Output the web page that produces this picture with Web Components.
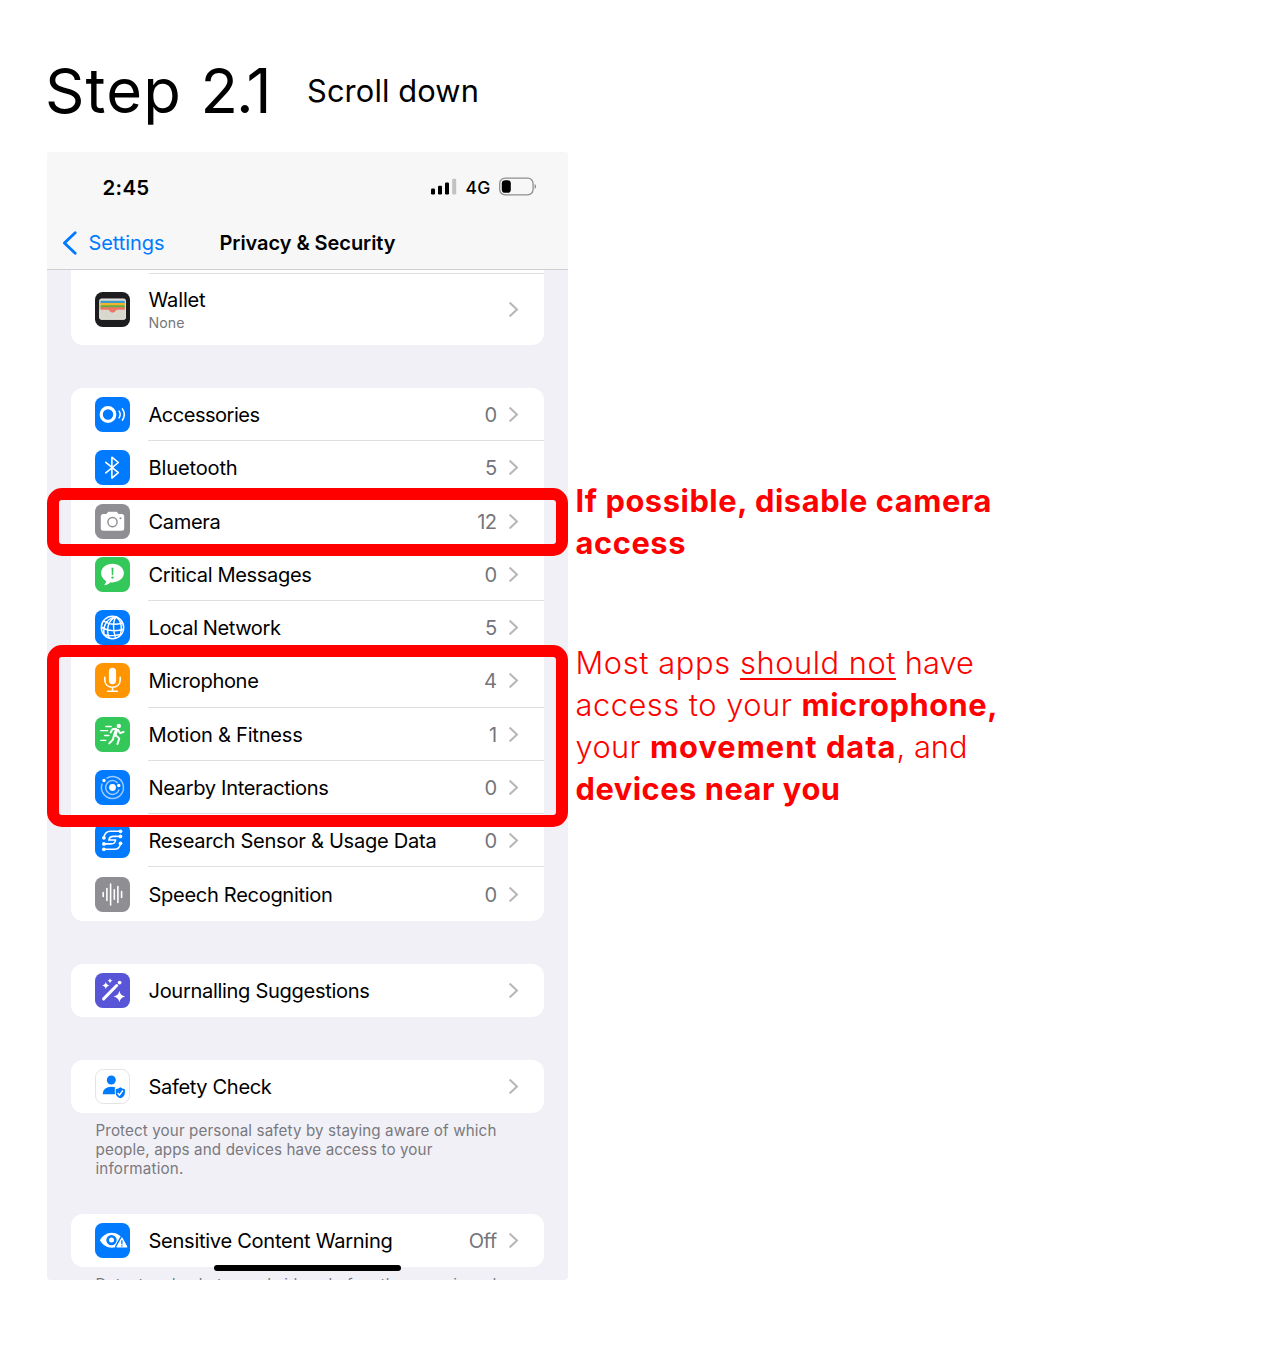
<!DOCTYPE html>
<html lang="en">
<head>
<meta charset="utf-8">
<title>Step 2.1</title>
<style>
html,body{margin:0;background:#fff}
body{font-family:Inter,"Liberation Sans",sans-serif;color:#000;width:1266px;height:1371px;overflow:hidden}
</style>
</head>
<body>
<guide-page>
  <step-heading slot="heading">
    <fit-text w="155.5">Step </fit-text><fit-text w="69">2.1</fit-text>
    <fit-text slot="action" w="172">Scroll down</fit-text>
  </step-heading>

  <phone-screen slot="phone">
    <status-bar slot="top"></status-bar>
    <nav-bar slot="top"><fit-text slot="back" w="76">Settings</fit-text><fit-text w="176">Privacy &amp; Security</fit-text></nav-bar>

    <settings-card first>
      <settings-row icon="wallet" tall><fit-text w="57">Wallet</fit-text><fit-text slot="sub" w="36">None</fit-text></settings-row>
    </settings-card>

    <settings-card style="margin-top:43px">
      <settings-row icon="accessories"><fit-text w="111">Accessories</fit-text><span slot="value">0</span></settings-row>
      <settings-row icon="bluetooth"><fit-text w="89">Bluetooth</fit-text><span slot="value">5</span></settings-row>
      <settings-row icon="camera"><fit-text w="72">Camera</fit-text><span slot="value">12</span></settings-row>
      <settings-row icon="critical"><fit-text w="163">Critical Messages</fit-text><span slot="value">0</span></settings-row>
      <settings-row icon="network"><fit-text w="132">Local Network</fit-text><span slot="value">5</span></settings-row>
      <settings-row icon="microphone"><fit-text w="110">Microphone</fit-text><span slot="value">4</span></settings-row>
      <settings-row icon="motion"><fit-text w="154">Motion &amp; Fitness</fit-text><span slot="value">1</span></settings-row>
      <settings-row icon="nearby"><fit-text w="180">Nearby Interactions</fit-text><span slot="value">0</span></settings-row>
      <settings-row icon="research"><fit-text w="288">Research Sensor &amp; Usage Data</fit-text><span slot="value">0</span></settings-row>
      <settings-row icon="speech"><fit-text w="184">Speech Recognition</fit-text><span slot="value">0</span></settings-row>
    </settings-card>

    <settings-card style="margin-top:43px">
      <settings-row icon="journal"><fit-text w="221">Journalling Suggestions</fit-text></settings-row>
    </settings-card>

    <settings-card style="margin-top:43px">
      <settings-row icon="safety"><fit-text w="123">Safety Check</fit-text></settings-row>
    </settings-card>
    <card-footnote>
      <fit-text w="401">Protect your personal safety by staying aware of which</fit-text>
      <fit-text w="337">people, apps and devices have access to your</fit-text>
      <fit-text w="88">information.</fit-text>
    </card-footnote>

    <settings-card style="margin-top:35.500px">
      <settings-row icon="sensitive"><fit-text w="244">Sensitive Content Warning</fit-text><span slot="value">Off</span></settings-row>
    </settings-card>
    <card-footnote>
      <fit-text w="401">Detect nude photos and videos before they are viewed</fit-text>
    </card-footnote>

    <highlight-box slot="marks" style="top:335.5px;height:68.5px"></highlight-box>
    <highlight-box slot="marks" style="top:493px;height:181.5px"></highlight-box>
  </phone-screen>

  <side-note slot="notes">
    <div><fit-text w="416.5" bold>If possible, disable camera</fit-text></div>
    <div><fit-text w="110.5" bold>access</fit-text></div>
  </side-note>
  <side-note slot="notes">
    <div><fit-text w="164.5">Most apps </fit-text><fit-text w="156" line>should not</fit-text><fit-text w="78"> have</fit-text></div>
    <div><fit-text w="226">access to your </fit-text><fit-text w="196.5" bold>microphone,</fit-text></div>
    <div><fit-text w="74.5">your </fit-text><fit-text w="246.5" bold>movement data</fit-text><fit-text w="71">, and</fit-text></div>
    <div><fit-text w="265" bold>devices near you</fit-text></div>
  </side-note>
</guide-page>

<script>
const define = (name, html, setup) => customElements.define(name, class extends HTMLElement {
  constructor() {
    super();
    this.attachShadow({ mode: 'open' }).innerHTML = html;
  }
  connectedCallback() { if (setup) setup.call(this, this.shadowRoot); }
});

const star = (x, y, r) => {
  const k = r * 0.16;
  return `<path fill="#fff" d="M${x} ${y - r}Q${x + k} ${y - k} ${x + r} ${y}Q${x + k} ${y + k} ${x} ${y + r}Q${x - k} ${y + k} ${x - r} ${y}Q${x - k} ${y - k} ${x} ${y - r}Z"/>`;
};
const dots = (list, r) => list.map(([x, y]) => `<circle cx="${x}" cy="${y}" r="${r}" fill="#fff"/>`).join('');

const ICONS = {
  wallet: ['#1d1d1f', `<rect x="4.4" y="6.7" width="26.4" height="20.9" rx="2" fill="#d9d8cf"/>
    <path fill="#3c9bcb" d="M5.4 8.7h24.4v3H5.4z"/><path fill="#f3b42c" d="M5.4 11h24.4v3H5.4z"/><path fill="#62ad45" d="M5.4 13.3h24.4v3H5.4z"/>
    <path fill="#ef7564" d="M5.4 15.3h24.4v3h-7c-1 0-1.500.400-2.200 1.300-1.700 2.200-4.300 2.200-6 0-.7-.9-1.200-1.300-2.200-1.300h-7z"/>
    <path fill="#d9d8cf" d="M4.400 17.700h8c1.100 0 1.600.500 2.300 1.400 1.600 2 4.200 2 5.800 0 .7-.9 1.200-1.400 2.300-1.400h8v7.900a2 2 0 0 1-2 2H6.400a2 2 0 0 1-2-2z"/>
    <rect x="4.700" y="7" width="25.800" height="20.300" rx="1.800" fill="none" stroke="#ecebe5" stroke-width=".7"/>`],
  accessories: ['#007aff', `<g fill="none" stroke="#fff"><circle cx="13" cy="17.500" r="6.800" stroke-width="3.200"/>
    <path stroke-width="1.500" stroke-linecap="round" d="M24.100 14.200Q26.300 17.500 24.100 20.800M27.400 11.900Q31.200 17.500 27.400 23.100"/></g>`],
  bluetooth: ['#007aff', `<path fill="none" stroke="#fff" stroke-width="1.600" stroke-linejoin="round" stroke-linecap="round" d="M10.800 12.300 23.400 22.700 16.900 28.100V7.200L23.400 12.500 10.800 22.900"/>`],
  camera: ['#8e8e93', `<path fill="#fff" d="M8.300 9.900h2.100c1 0 1.300-.3 1.800-1 .5-.8 1-1.200 2-1.200h6.600c1 0 1.500.4 2 1.200.5.7.8 1 1.800 1h2.100A2.500 2.500 0 0 1 29.200 12.400v11.800a2.500 2.500 0 0 1-2.500 2.500H8.300a2.500 2.500 0 0 1-2.500-2.500V12.400A2.500 2.500 0 0 1 8.300 9.900z"/>
    <circle cx="17.500" cy="18.100" r="4.600" fill="none" stroke="#8e8e93" stroke-width="1.400"/><circle cx="25.500" cy="14.200" r="1" fill="#8e8e93"/>`],
  critical: ['#34c759', `<path fill="#fff" d="M17.500 6.800c6.300 0 11.400 4.100 11.400 9.300s-5.100 9.300-11.400 9.300c-.8 0-1.500 0-2.200-.2-1.200 1.400-3.200 2.700-5.300 3-.5 0-.7-.4-.4-.8.8-.8 1.400-1.900 1.400-3.400C8 22.300 6.100 19.400 6.100 16.100c0-5.200 5.100-9.300 11.400-9.300z"/>
    <path fill="#34c759" d="M16.500 10.700h2l-.4 7.600h-1.200z"/><circle cx="17.500" cy="20.600" r="1.200" fill="#34c759"/>`],
  network: ['#007aff', `<g fill="none" stroke="#fff" stroke-width="1.450"><circle cx="17.500" cy="17.500" r="11.200"/>
    <path d="M21 6.900C13.600 10 10.700 18.200 14 28M21 6.900C18 11 17.500 20 20.700 28.200M21 6.900C26.300 10.500 27.800 18 25.200 25.500M8.500 11C14 14.600 21.500 14.900 27.500 12.700M6.400 17.200C13 21.500 22.500 21.300 28.500 19.200M9 24.700C14.500 26 21 25.800 26.500 24.200M21 6.900C12.500 8 7.500 15 9 24.700"/></g>`],
  microphone: ['#ff9500', `<rect x="13.900" y="4.800" width="7.200" height="16.400" rx="3.600" fill="#fff"/>
    <path fill="none" stroke="#fff" stroke-width="1.600" stroke-linecap="round" d="M9.800 14.300v2.500c0 4.600 3.200 7.500 7.700 7.500s7.700-2.900 7.700-7.500v-2.500M17.500 24.500v3.700M12.600 28.300h9.800"/>`],
  motion: ['#34c759', `<circle cx="23.800" cy="8.900" r="2.200" fill="#fff"/>
    <g fill="none" stroke="#fff" stroke-linecap="round" stroke-linejoin="round"><path stroke-width="1.300" d="M10.800 9.500h5.400M5.700 13.700h7M9.500 18.500h4.500M5.700 23.300h5.200"/>
    <path stroke-width="3.300" d="M21.500 13.200 19.600 18.300"/><path stroke-width="1.900" d="M21 11.700 17.400 12.200 15.600 15.500M23 12.800l2.200 3.400 3.500-1.300M20.700 18.200l3.600 3.200-1.900 5.700M18.800 18.800l-.8 3.700-3.700 3.900"/></g>`],
  nearby: ['#007aff', `<g fill="none" stroke="#fff" stroke-width="1.500" opacity=".6"><path d="M11.500 8.300A11 11 0 1 1 7.200 13.600M24.100 19.500A6.900 6.900 0 1 1 22.700 12.900"/></g>
    <circle cx="17.500" cy="17.500" r="3.400" fill="#fff"/>${dots([[9, 10.500], [23.700, 15.500]], 1.700)}`],
  research: ['#007aff', `<path fill="none" stroke="#fff" stroke-width="1.600" stroke-linecap="round" d="M8.900 14.800C9.500 10.500 11.500 8.300 15.500 8.300h10M25.500 13.400H18.500C15.500 13.400 14.200 14.800 13.900 17H20M8.900 20.900H16C19 20.900 20.300 19.500 20.600 17M25.500 20.300c-.5 4-2.600 6-6.500 6H8.900"/>
    ${dots([[25.500, 8.300], [25.500, 13.400], [8.900, 14.800], [8.900, 20.900], [25.500, 20.300], [8.900, 26.300]], 1.850)}`],
  speech: ['#8e8e93', `<path fill="none" stroke="#fff" stroke-width="1.600" stroke-linecap="round" d="M8.200 15.500v4M11.900 11.500v12M15.600 7v21M19.300 12.800v9.400M22.900 9.500v16M26.600 14.600v5.800"/>`],
  journal: ['#5856d6', `<path fill="none" stroke="#fff" stroke-width="3" stroke-linecap="round" d="M8.600 25.900 21.700 12.500"/><circle cx="24.600" cy="9.600" r="1.900" fill="#fff"/>${star(10.8, 12.5, 3.7)}${star(15, 7.7, 2.5)}${star(24.4, 23.5, 5.8)}`],
  safety: ['#fff', `<circle cx="16.300" cy="11" r="4.500" fill="#007aff"/><path fill="#007aff" d="M7.800 25.300c0-4.700 3.500-7.500 8.500-7.500 1.700 0 3.200.3 4.400.9-.5.300-.9.500-.9 1.200v3.300c0 .8.100 1.500.4 2.100z"/>
    <path fill="#007aff" d="M25.300 18.200c1.300 1 2.600 1.500 4 1.700.4 0 .6.300.6.700v3.200c0 3-1.900 4.500-4.600 5.500-2.700-1-4.600-2.500-4.600-5.500v-3.200c0-.4.200-.7.600-.7 1.400-.2 2.700-.7 4-1.700z"/>
    <path fill="none" stroke="#fff" stroke-width="1.400" d="m22.700 24 1.800 2.200 3.300-4.700"/>`],
  sensitive: ['#007aff', `<path fill="#fff" d="M4.900 17.200c2.300-4.300 6.700-7.500 11.900-7.500s9.600 3.200 11.900 7.500c-2.300 4.300-6.700 7.500-11.900 7.500S7.200 21.500 4.900 17.200z"/>
    <circle cx="16.500" cy="17.100" r="3.850" fill="none" stroke="#007aff" stroke-width="2.700"/>
    <path fill="#fff" stroke="#007aff" stroke-width="1.400" stroke-linejoin="round" d="M25.900 14.100c.5-.8 1.500-.8 2 0l5 9.100c.5 1-.1 2.100-1.200 2.100h-9.600c-1.100 0-1.700-1.100-1.200-2.100z"/>
    <path stroke="#007aff" stroke-width="1.300" d="M26.900 17.300v4M26.900 22.200v1.400"/>`]
};

define('guide-page', `<style>
  :host{display:flex;flex-direction:column;padding:52px 0 0 47px;width:1219px}
  .body{display:flex;align-items:flex-start;gap:7.500px;margin-top:24px}
  .notes{display:flex;flex-direction:column;gap:77.500px;padding-top:328px}
</style><slot name="heading"></slot><div class="body"><slot name="phone"></slot><div class="notes"><slot name="notes"></slot></div></div>`);

define('step-heading', `<style>
  :host{display:flex;align-items:center;height:76px;font-size:61.500px}
  .action{font-size:30.800px;margin-left:37.500px}
  .title{line-height:76px;margin-left:-2px;padding-top:1px;display:flex}
</style><div class="title"><slot></slot></div><div class="action"><slot name="action"></slot></div>`);

define('phone-screen', `<style>
  :host{display:block;position:relative;width:521px;height:1128px;background:#f1f0f6;border-radius:4px}
  .screen{height:1128px;overflow:hidden;border-radius:4px;display:flex;flex-direction:column}
  .top{background:#f7f7f7;height:117px;flex:none;border-bottom:1px solid #cfcfd2;display:flex;flex-direction:column}
  .list{display:flex;flex-direction:column;padding:0 24.500px 0 24px}
  .home{position:absolute;left:167px;top:1113px;width:187px;height:6px;border-radius:3px;background:#000}
</style><div class="screen"><div class="top"><slot name="top"></slot></div><div class="list"><slot></slot></div></div><div class="home"></div><slot name="marks"></slot>`);

define('status-bar', `<style>
  :host{display:flex;align-items:center;height:69px;padding:0 31px 0 55.500px;font-size:20.500px;font-weight:600}
  .net{font-size:17.500px;font-weight:500;margin:2px 8.500px 0 9px}
  .fill{flex:1}
  .time{padding-top:1px}
  svg{display:block}
</style><div class="time"><fit-text w="47">2:45</fit-text></div><div class="fill"></div>
<svg width="26" height="18" viewBox="0 0 26 18"><rect y="10.500" width="4" height="6" rx="1.200"/><rect x="7" y="7.800" width="4" height="8.700" rx="1.200"/><rect x="14" y="4.500" width="4" height="12" rx="1.200"/><rect x="21.200" y=".8" width="4" height="15.700" rx="1.200" fill="#c2c2c4"/></svg>
<div class="net"><fit-text w="25">4G</fit-text></div>
<svg width="38" height="19" viewBox="0 0 38 19"><rect x=".7" y="1.200" width="33.400" height="16.600" rx="5.300" fill="none" stroke="#8f8f91" stroke-width="1.300"/><rect x="2.800" y="3.200" width="9" height="12.600" rx="3.400"/><path fill="#8f8f91" d="M35.600 7c2 .9 2 4.100 0 5z"/></svg>`);

define('nav-bar', `<style>
  :host{display:flex;align-items:center;height:44px;font-size:20px;font-weight:600}
  svg{display:block;margin-left:14px}
  .back{color:#007aff;font-weight:400;width:120px;margin-left:10.500px}
  .title{margin-left:11px}
</style><svg width="17" height="26" viewBox="0 0 17 26"><path d="M14.200 2.800 3.400 13l10.800 10.200" fill="none" stroke="#007aff" stroke-width="2.900" stroke-linecap="round" stroke-linejoin="round"/></svg><div class="back"><slot name="back"></slot></div><div class="title"><slot></slot></div>`);

define('settings-card', `<style>
  :host{display:flex;flex-direction:column;background:#fff;border-radius:12px;overflow:hidden;flex:none}
  :host([first]){border-radius:0 0 12px 12px;height:75px}
  .gap{display:none;height:3px;flex:none;margin-left:78px;border-bottom:1px solid #dfdfe1}
  :host([first]) .gap{display:block}
  ::slotted(settings-row:last-child){--sep:transparent}
</style><div class="gap"></div><slot></slot>`);

define('settings-row', `<style>
  :host{display:flex;align-items:stretch;height:53.280px;padding-left:24px;font-size:20.100px}
  :host([tall]){height:71px}
  .icon{width:35px;height:35px;align-self:center;flex:none}
  svg{display:block}
  .main{flex:1;margin-left:18px;display:flex;align-items:center;border-bottom:1px solid var(--sep,#dfdfe1);padding:1px 24.500px 0 0}
  .label{flex:1;display:flex;flex-direction:column;align-items:flex-start;justify-content:center;padding:1px 0 0 .5px}
  .sub{font-size:14.200px;color:#77777b;line-height:17px}
  :host([tall]) .main{padding-top:0}
  :host([tall]) .label{line-height:24px;gap:2px}
  .value{color:#75757a;margin-right:12.500px;letter-spacing:-.6px;padding-top:1px}
</style><div class="icon"></div><div class="main"><div class="label"><slot></slot><div class="sub"><slot name="sub"></slot></div></div><div class="value"><slot name="value"></slot></div>
<svg width="10" height="17" viewBox="0 0 10 17"><path d="M1.300 2.200 8 8.500 1.300 14.800" fill="none" stroke="#b8b8ba" stroke-width="2.200" stroke-linecap="round" stroke-linejoin="round"/></svg></div>`,
function (root) {
  const [bg, art] = ICONS[this.getAttribute('icon')];
  const edge = bg === '#fff' ? ' stroke="#e3e3e6" stroke-width="1"' : '';
  root.querySelector('.icon').innerHTML = `<svg width="35" height="35" viewBox="0 0 35 35"><rect ${edge ? 'x=".5" y=".5" width="34" height="34"' : 'width="35" height="35"'} rx="7.800" fill="${bg}"${edge}/>${art}</svg>`;
});

define('card-footnote', `<style>
  :host{display:flex;flex-direction:column;align-items:flex-start;padding:7.500px 0 0 24.500px;font-size:15.200px;line-height:19.300px;color:#79797f;flex:none}
</style><slot></slot>`);

define('highlight-box', `<style>
  :host{display:block;position:absolute;left:0;width:521px;box-sizing:border-box;border:12.500px solid #f00;border-radius:15px}
</style>`);

define('side-note', `<style>
  :host{display:block;color:#f00;font-size:30.800px;line-height:42px;font-weight:350;white-space:nowrap}
</style><slot></slot>`);

/* Text run that spreads its letters over the width given in w. */
define('fit-text', `<style>
  :host{display:inline-block;white-space:pre}
  :host([bold]){font-weight:700}
  :host([line]){text-decoration:underline;text-decoration-thickness:1.500px;text-underline-offset:4px}
</style><slot></slot>`, function () {
  const n = this.textContent.length;
  const natural = this.getBoundingClientRect().width;
  if (natural) this.style.letterSpacing = ((+this.getAttribute('w') - natural) / n).toFixed(3) + 'px';
});
</script>
</body>
</html>
